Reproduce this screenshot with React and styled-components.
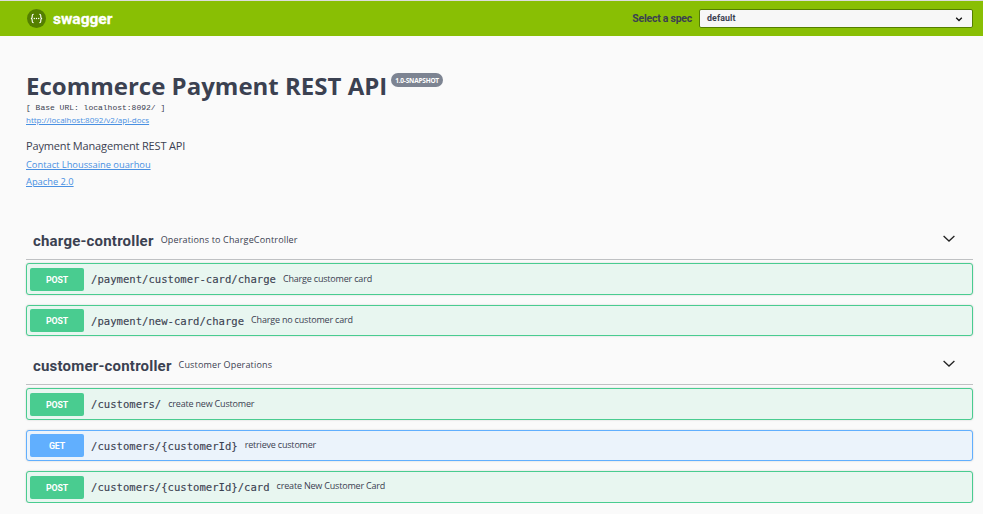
import React from 'react';
import styled, { createGlobalStyle } from 'styled-components';

const methods = {
  POST: { solid: '#49cc90', tint: '#e8f6f0' },
  GET: { solid: '#61affe', tint: '#ebf3fb' },
};

const sections = [
  {
    name: 'charge-controller',
    description: 'Operations to ChargeController',
    operations: [
      { method: 'POST', path: '/payment/customer-card/charge', summary: 'Charge customer card', height: 32 },
      { method: 'POST', path: '/payment/new-card/charge', summary: 'Charge no customer card', height: 31, raise: true },
    ],
  },
  {
    name: 'customer-controller',
    description: 'Customer Operations',
    operations: [
      { method: 'POST', path: '/customers/', summary: 'create new Customer', height: 32 },
      { method: 'GET', path: '/customers/{customerId}', summary: 'retrieve customer', height: 31, raise: true },
      { method: 'POST', path: '/customers/{customerId}/card', summary: 'create New Customer Card', height: 32, raise: true },
    ],
  },
];

const GlobalStyle = createGlobalStyle`
  *, *::before, *::after { box-sizing: border-box; }
  body {
    margin: 0;
    background: #fafafa;
    color: #3b4151;
    font-family: "Open Sans", sans-serif;
    overflow: hidden;
  }
`;

const Topbar = styled.header`
  display: flex;
  align-items: center;
  height: 36px;
  padding: 0 10px 0 27px;
  border-top: 1px solid #dcdcdc;
  background: #89bf04;
`;

const Brand = styled.div`
  display: flex;
  align-items: center;
  gap: 7px;
  flex: 1;
`;

const BrandName = styled.span`
  color: #fff;
  font: 700 15.5px/20px Roboto, sans-serif;
  -webkit-text-stroke: 0.3px #fff;
`;

const SpecLabel = styled.span`
  margin-right: 7px;
  padding-top: 1px;
  font: 700 10.5px/20px Roboto, sans-serif;
  letter-spacing: -0.25px;
`;

const SpecSelect = styled.div`
  display: flex;
  align-items: center;
  justify-content: space-between;
  width: 274px;
  height: 19px;
  padding: 0 9px 0 7px;
  border: 1px solid #547f00;
  border-radius: 2px;
  background: #f7f7f7;
  font: 700 8.8px/16px Roboto, sans-serif;
  letter-spacing: 0.1px;
`;

const SelectValue = styled.span`
  padding-bottom: 1px;
`;

const Page = styled.main`
  padding: 34px 10px 0 26px;
`;

const Info = styled.section`
  display: flex;
  flex-direction: column;
  align-items: flex-start;
  height: 150px;
`;

const TitleRow = styled.div`
  display: flex;
  align-items: flex-start;
  height: 33px;
`;

const Title = styled.h1`
  margin: 0;
  font-size: 24px;
  font-weight: 700;
  line-height: 31px;
  white-space: nowrap;
`;

const Version = styled.span`
  height: 14px;
  margin: 3px 0 0 4px;
  padding: 0 4px;
  border-radius: 7px;
  background: #7d8492;
  color: #fff;
  font-size: 6.5px;
  font-weight: 700;
  line-height: 15px;
  letter-spacing: -0.22px;
  white-space: nowrap;
`;

const BaseUrl = styled.pre`
  margin: 0;
  font: 400 8px/10px "Liberation Mono", monospace;
`;

const Link = styled.a`
  color: #4990e2;
  font-size: ${({ $size }) => $size}px;
  line-height: ${({ $line }) => $line}px;
  text-decoration: underline;
`;

const Description = styled.p`
  margin: 11px 0 2px;
  font-size: 11px;
  line-height: 16px;
  letter-spacing: -0.16px;
`;

const Tag = styled.section`
  display: flex;
  flex-direction: column;
`;

const TagHeader = styled.div`
  display: flex;
  align-items: center;
  height: ${({ $first }) => ($first ? 40 : 49)}px;
  padding: ${({ $first }) => ($first ? 0 : 9)}px 18px 0 7px;
  border-bottom: 1px solid #bfc1c3;
  margin-bottom: 3px;
`;

const TagName = styled.h2`
  margin: 2px 7px 0 0;
  font: 700 15px/24px Roboto, sans-serif;
  letter-spacing: 0.2px;
`;

const TagDescription = styled.span`
  flex: 1;
  font-size: 9px;
  line-height: 16px;
  letter-spacing: 0.16px;
`;

const Operations = styled.div`
  display: flex;
  flex-direction: column;
  gap: 10px;
`;

const Operation = styled.div`
  display: flex;
  align-items: center;
  height: ${({ $height }) => $height}px;
  padding: 0 3px;
  border: 1px solid ${({ $method }) => methods[$method].solid};
  border-radius: 3px;
  background: ${({ $method }) => methods[$method].tint};
  box-shadow: 0 0 2px rgba(0, 0, 0, 0.19);
`;

const Method = styled.span`
  width: 54px;
  height: 23px;
  margin-right: 7px;
  border-radius: 2px;
  background: ${({ $method }) => methods[$method].solid};
  color: #fff;
  font: 700 8.8px/24px Roboto, sans-serif;
  letter-spacing: -0.1px;
  text-align: center;
`;

const Path = styled.span`
  margin-right: 7px;
  font: 400 10.6px/16px "DejaVu Sans Mono", monospace;
  -webkit-text-stroke: 0.12px #3b4151;
`;

const Summary = styled.span`
  font-size: 9px;
  line-height: 14px;
  letter-spacing: -0.19px;
  padding-bottom: ${({ $raise }) => ($raise ? 2 : 0)}px;
`;

const Logo = () => (
  <svg width="19" height="19" viewBox="0 0 19 19" fill="none">
    <circle cx="9.5" cy="9.5" r="9.5" fill="#547f00" />
    <path
      d="M6.7 5.3c-1.3 0-1.5.4-1.5 1.4v1.2c0 .9-.3 1.4-1.2 1.6.9.2 1.2.7 1.2 1.6v1.2c0 1 .2 1.4 1.5 1.4M12.3 5.3c1.3 0 1.5.4 1.5 1.4v1.2c0 .9.3 1.4 1.2 1.6-.9.2-1.2.7-1.2 1.6v1.2c0 1-.2 1.4-1.5 1.4"
      stroke="#fff"
      strokeWidth="1.1"
    />
    <circle cx="7.3" cy="9.5" r=".7" fill="#fff" />
    <circle cx="9.5" cy="9.5" r=".7" fill="#fff" />
    <circle cx="11.7" cy="9.5" r=".7" fill="#fff" />
  </svg>
);

const SelectArrow = () => (
  <svg width="8" height="6" viewBox="0 0 8 6" fill="none">
    <path d="M1.2 1.7 4 4.5l2.8-2.8" stroke="#111" strokeWidth="1.3" />
  </svg>
);

const Chevron = () => (
  <svg width="12" height="10" viewBox="0 0 12 10" fill="none">
    <path d="M.6 1 6 6l5.4-5" stroke="#222" strokeWidth="1.3" />
  </svg>
);

export default function App() {
  return (
    <>
      <GlobalStyle />
      <Topbar>
        <Brand>
          <Logo />
          <BrandName>swagger</BrandName>
        </Brand>
        <SpecLabel>Select a spec</SpecLabel>
        <SpecSelect>
          <SelectValue>default</SelectValue>
          <SelectArrow />
        </SpecSelect>
      </Topbar>
      <Page>
        <Info>
          <TitleRow>
            <Title>Ecommerce Payment REST API</Title>
            <Version>1.0-SNAPSHOT</Version>
          </TitleRow>
          <BaseUrl>[ Base URL: localhost:8092/ ]</BaseUrl>
          <Link $size={8} $line={14}>http://localhost:8092/v2/api-docs</Link>
          <Description>Payment Management REST API</Description>
          <Link $size={9.3} $line={17}>Contact Lhoussaine ouarhou</Link>
          <Link $size={9.3} $line={17}>Apache 2.0</Link>
        </Info>
        {sections.map((section, index) => (
          <Tag key={section.name}>
            <TagHeader $first={index === 0}>
              <TagName>{section.name}</TagName>
              <TagDescription>{section.description}</TagDescription>
              <Chevron />
            </TagHeader>
            <Operations>
              {section.operations.map((op) => (
                <Operation key={op.path} $method={op.method} $height={op.height}>
                  <Method $method={op.method}>{op.method}</Method>
                  <Path>{op.path}</Path>
                  <Summary $raise={op.raise}>{op.summary}</Summary>
                </Operation>
              ))}
            </Operations>
          </Tag>
        ))}
      </Page>
    </>
  );
}
